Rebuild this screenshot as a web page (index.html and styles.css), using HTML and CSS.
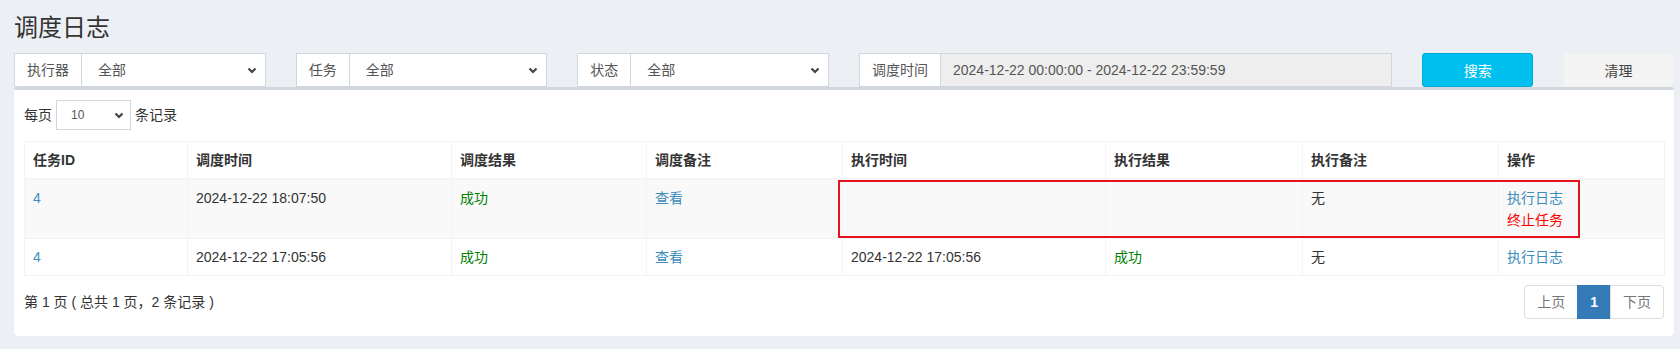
FILE: index.html
```html
<!DOCTYPE html>
<html lang="zh-CN">
  <head>
    <meta charset="UTF-8" />
    <title>调度日志</title>
    <link rel="stylesheet" href="styles.css">
  </head>
  <body>
    <div class="content">
      <h1 class="page-title">调度日志</h1>

      <div class="filters">
        <div class="input-group span-2">
          <span class="addon">执行器</span>
          <div class="fake-select">
            <span>全部</span>
            <svg class="caret" width="10" height="7" viewBox="0 0 10 7"><path d="M1.5 1.5 5 5 8.5 1.5" fill="none" stroke="#444" stroke-width="2.2"/></svg>
          </div>
        </div>
        <div class="input-group span-2">
          <span class="addon">任务</span>
          <div class="fake-select">
            <span>全部</span>
            <svg class="caret" width="10" height="7" viewBox="0 0 10 7"><path d="M1.5 1.5 5 5 8.5 1.5" fill="none" stroke="#444" stroke-width="2.2"/></svg>
          </div>
        </div>
        <div class="input-group span-2">
          <span class="addon">状态</span>
          <div class="fake-select">
            <span>全部</span>
            <svg class="caret" width="10" height="7" viewBox="0 0 10 7"><path d="M1.5 1.5 5 5 8.5 1.5" fill="none" stroke="#444" stroke-width="2.2"/></svg>
          </div>
        </div>
        <div class="input-group span-4">
          <span class="addon">调度时间</span>
          <div class="readonly-input">2024-12-22 00:00:00 - 2024-12-22 23:59:59</div>
        </div>
        <button class="btn btn-info">搜索</button>
        <button class="btn btn-default">清理</button>
      </div>

      <div class="box">
        <div class="box-body">
          <div class="length">
            <span>每页</span>
            <div class="fake-select small">
              <span>10</span>
              <svg class="caret" width="10" height="7" viewBox="0 0 10 7"><path d="M1.5 1.5 5 5 8.5 1.5" fill="none" stroke="#444" stroke-width="2.2"/></svg>
            </div>
            <span>条记录</span>
          </div>

          <div class="table-wrap">
            <table class="log-table">
              <colgroup>
                <col style="width:163px">
                <col style="width:264px">
                <col style="width:195px">
                <col style="width:196px">
                <col style="width:263px">
                <col style="width:197px">
                <col style="width:196px">
                <col style="width:166px">
              </colgroup>
              <thead>
                <tr>
                  <th>任务ID</th>
                  <th>调度时间</th>
                  <th>调度结果</th>
                  <th>调度备注</th>
                  <th>执行时间</th>
                  <th>执行结果</th>
                  <th>执行备注</th>
                  <th>操作</th>
                </tr>
              </thead>
              <tbody>
                <tr class="odd">
                  <td><a href="#">4</a></td>
                  <td>2024-12-22 18:07:50</td>
                  <td><span class="ok">成功</span></td>
                  <td><a href="#">查看</a></td>
                  <td></td>
                  <td></td>
                  <td>无</td>
                  <td>
                    <a class="op" href="#">执行日志</a>
                    <a class="op kill" href="#">终止任务</a>
                  </td>
                </tr>
                <tr>
                  <td><a href="#">4</a></td>
                  <td>2024-12-22 17:05:56</td>
                  <td><span class="ok">成功</span></td>
                  <td><a href="#">查看</a></td>
                  <td>2024-12-22 17:05:56</td>
                  <td><span class="ok">成功</span></td>
                  <td>无</td>
                  <td><a class="op" href="#">执行日志</a></td>
                </tr>
              </tbody>
            </table>
            <div class="highlight"></div>
          </div>

          <div class="table-foot">
            <div class="info">第 1 页 ( 总共 1 页，2 条记录 )</div>
            <ul class="pagination">
              <li class="disabled">上页</li>
              <li class="active">1</li>
              <li class="disabled">下页</li>
            </ul>
          </div>
        </div>
      </div>
    </div>
  </body>
</html>
```

FILE: styles.css
```css
body {
  margin: 0;
  background: #ecf0f5;
  color: #333;
  font-family: "Liberation Sans", "Noto Sans CJK SC", sans-serif;
  font-size: 14px;
  line-height: 20px;
}

.content {
  padding: 15px 6px 0 14px;
}

.page-title {
  margin: 0 0 12px 0;
  font-size: 24px;
  font-weight: normal;
  line-height: 26px;
  color: #333;
}

/* filter bar */
.filters {
  display: grid;
  grid-template-columns: repeat(12, 1fr);
  column-gap: 30px;
  height: 34px;
}

.span-2 {
  grid-column: span 2;
}

.span-4 {
  grid-column: span 4;
}

.input-group {
  display: flex;
  height: 34px;
}

.addon {
  display: flex;
  align-items: center;
  padding: 0 12px;
  background: #fff;
  border: 1px solid #d2d6de;
  color: #555;
  white-space: nowrap;
}

.fake-select {
  flex: 1;
  display: flex;
  align-items: center;
  justify-content: space-between;
  padding: 0 8px 0 16px;
  background: #fff;
  border: 1px solid #d2d6de;
  border-left: none;
  color: #555;
}

.fake-select.small {
  flex: none;
  width: 75px;
  height: 30px;
  box-sizing: border-box;
  border-left: 1px solid #d2d6de;
  padding: 0 6px 0 14px;
  font-size: 12px;
}

.readonly-input {
  flex: 1;
  display: flex;
  align-items: center;
  padding: 0 12px;
  background: #eee;
  border: 1px solid #d2d6de;
  border-left: none;
  color: #555;
}

.btn {
  height: 34px;
  border-radius: 3px;
  font-family: inherit;
  font-size: 14px;
  cursor: pointer;
}

.btn-info {
  background: #00c0ef;
  border: 1px solid #00acd6;
  color: #fff;
}

.btn-default {
  background: #f4f4f4;
  border: 1px solid #f0f0f0;
  color: #444;
}

/* box */
.box {
  background: #fff;
  border-top: 3px solid #d2d6de;
  border-radius: 3px;
  box-shadow: 0 1px 1px rgba(0, 0, 0, 0.1);
}

.box-body {
  padding: 10px 10px 17px;
}

.length {
  display: flex;
  align-items: center;
  gap: 4px;
  height: 30px;
}

.table-wrap {
  position: relative;
  margin-top: 11px;
}

.log-table {
  width: 100%;
  table-layout: fixed;
  border-collapse: collapse;
}

.log-table th,
.log-table td {
  border: 1px solid #f4f4f4;
  padding: 8px;
  text-align: left;
  vertical-align: top;
}

.log-table th {
  font-weight: bold;
  border-bottom-width: 2px;
}

.log-table tr.odd td {
  background: #f9f9f9;
}

.log-table a {
  color: #3c8dbc;
  text-decoration: none;
}

.log-table .op {
  display: block;
}

.log-table .kill {
  margin-top: 2px;
  color: #f00;
}

.ok {
  color: #008000;
}

/* annotation frame */
.highlight {
  position: absolute;
  left: 814px;
  top: 39px;
  width: 738px;
  height: 54px;
  border: 2px solid #e3141f;
}

.table-foot {
  display: flex;
  justify-content: space-between;
  align-items: center;
  margin-top: 9px;
}

.pagination {
  display: flex;
  margin: 0;
  padding: 0;
  list-style: none;
}

.pagination li {
  padding: 6px 12px;
  border: 1px solid #ddd;
  margin-left: -1px;
  background: #fff;
  color: #777;
}

.pagination li:first-child {
  border-radius: 4px 0 0 4px;
}

.pagination li:last-child {
  border-radius: 0 4px 4px 0;
}

.pagination li.active {
  background: #337ab7;
  border-color: #337ab7;
  color: #fff;
  font-weight: bold;
}
```
